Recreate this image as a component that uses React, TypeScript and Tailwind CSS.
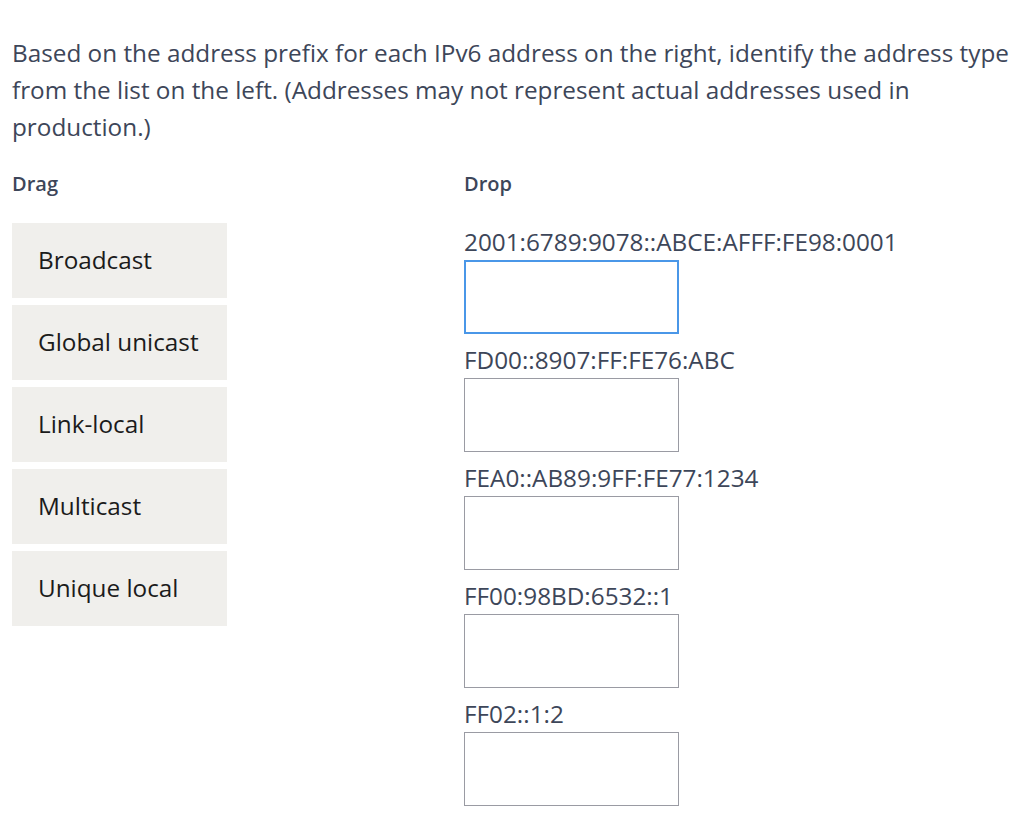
const DRAG_ITEMS = ['Broadcast', 'Global unicast', 'Link-local', 'Multicast', 'Unique local']

const DROP_TARGETS = [
  { address: '2001:6789:9078::ABCE:AFFF:FE98:0001', active: true },
  { address: 'FD00::8907:FF:FE76:ABC', active: false },
  { address: 'FEA0::AB89:9FF:FE77:1234', active: false },
  { address: 'FF00:98BD:6532::1', active: false },
  { address: 'FF02::1:2', active: false },
]

export default function App() {
  return (
    <div className="min-h-screen bg-white px-3 pt-[34px] font-['Open_Sans',sans-serif] text-[#3d4659]">
      <p className="text-[24.3px] leading-[37px]">
        Based on the address prefix for each IPv6 address on the right, identify the address type from the
        list on the left. (Addresses may not represent actual addresses used in production.)
      </p>

      <div className="mt-[27px] flex">
        {/* Drag column */}
        <div className="w-[452px]">
          <h3 className="text-[20px] font-semibold leading-6 text-[#3d4659]">Drag</h3>
          <div className="mt-[27px] flex flex-col gap-[7px]">
            {DRAG_ITEMS.map((item) => (
              <div
                key={item}
                className="flex h-[75px] w-[215px] items-center bg-[#f0efec] pl-[26px] text-[24.3px] text-[#1b1b1b]"
              >
                {item}
              </div>
            ))}
          </div>
        </div>

        {/* Drop column */}
        <div>
          <h3 className="text-[20px] font-semibold leading-6 text-[#3d4659]">Drop</h3>
          <div className="mt-[31px] flex flex-col">
            {DROP_TARGETS.map((t) => (
              <div key={t.address} className="mb-[11px]">
                <div className="text-[24.3px] leading-[30px]">{t.address}</div>
                <div
                  className={
                    t.active
                      ? 'mt-[3px] h-[74px] w-[215px] border-[2.5px] border-[#4a97e8] bg-white'
                      : 'mt-[3px] h-[74px] w-[215px] border-[1.5px] border-[#9a9ba3] bg-white'
                  }
                />
              </div>
            ))}
          </div>
        </div>
      </div>
    </div>
  )
}
